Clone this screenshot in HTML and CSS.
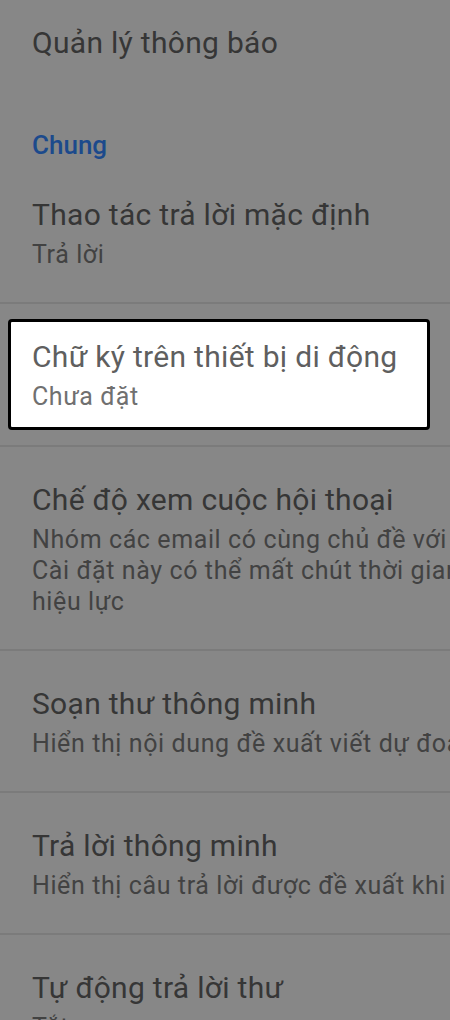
FILE: index.html
```html
<!DOCTYPE html>
<html lang="vi">
<head>
<meta charset="utf-8">
<title>Cài đặt</title>
<link rel="stylesheet" href="styles.css">
</head>
<body>
<main class="settings">
  <div class="head">
    <div class="title">Quản lý thông báo</div>
    <div class="section">Chung</div>
  </div>

  <div class="row">
    <div class="title">Thao tác trả lời mặc định</div>
    <div class="sub">Trả lời</div>
  </div>

  <div class="row row-focus">
    <div class="focus-box">
      <div class="title">Chữ ký trên thiết bị di động</div>
      <div class="sub">Chưa đặt</div>
    </div>
  </div>

  <div class="row">
    <div class="title">Chế độ xem cuộc hội thoại</div>
    <div class="sub">Nhóm các email có cùng chủ đề với nhau.<br>Cài đặt này có thể mất chút thời gian để có<br>hiệu lực</div>
  </div>

  <div class="row">
    <div class="title">Soạn thư thông minh</div>
    <div class="sub">Hiển thị nội dung đề xuất viết dự đoán khi soạn thư</div>
  </div>

  <div class="row">
    <div class="title">Trả lời thông minh</div>
    <div class="sub">Hiển thị câu trả lời được đề xuất khi có sẵn</div>
  </div>

  <div class="row">
    <div class="title">Tự động trả lời thư</div>
    <div class="sub">Tắt</div>
  </div>
</main>
</body>
</html>
```

FILE: styles.css
```css
html, body {
  margin: 0;
  padding: 0;
  background: #878787;
  overflow: hidden;
}

.settings {
  font-family: Roboto, "Noto Sans", "Liberation Sans", sans-serif;
  width: 450px;
  height: 1020px;
  overflow: hidden;
  white-space: nowrap;
}

/* list rows clip long lines at the screen edge */
.row, .head {
  overflow: hidden;
}

.title {
  font-size: 30px;
  line-height: 38px;
  letter-spacing: 0.3px;
  color: #363636;
}

.sub {
  margin-top: 5px;
  font-size: 25px;
  line-height: 31px;
  letter-spacing: 0.6px;
  color: #424242;
}

.head {
  padding: 24px 0 2px 32px;
  height: 136px;
}

.section {
  margin-top: 67px;
  font-size: 26px;
  line-height: 32px;
  font-weight: 500;
  color: #1c4a8c;
}

.row {
  padding: 34px 0 32px 32px;
  border-bottom: 2px solid #7b7b7b;
}

.row-focus {
  padding: 15px 20px 15px 8px;
}

.focus-box {
  background: #ffffff;
  border: 3px solid #000000;
  border-radius: 4px;
  padding: 16px 0 15px 21px;
}

.focus-box .title {
  color: #5f5f5f;
}

.focus-box .sub {
  color: #707070;
}
```
